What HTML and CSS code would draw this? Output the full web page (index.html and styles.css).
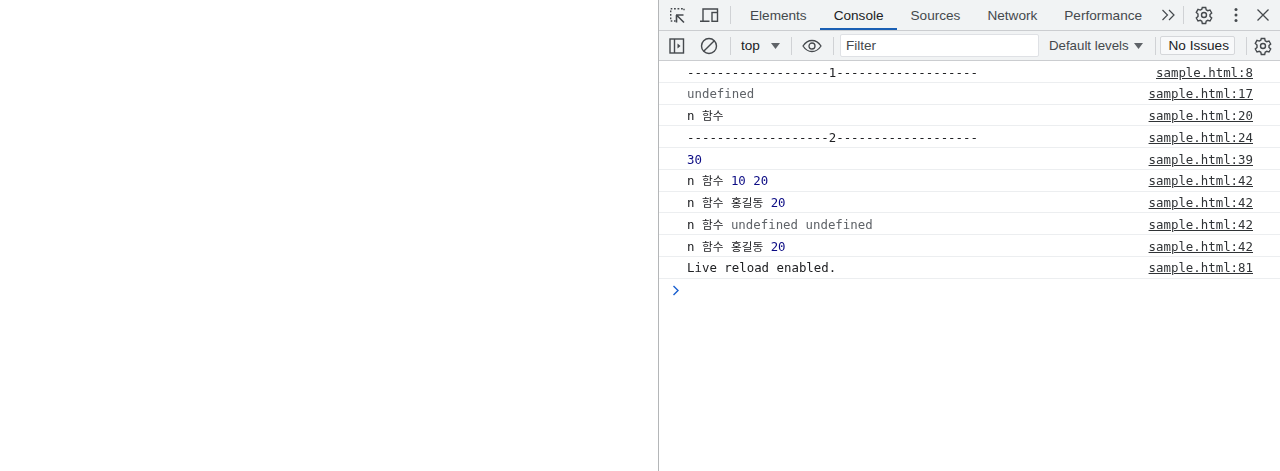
FILE: index.html
```html
<!DOCTYPE html>
<html lang="ko">
<head>
<meta charset="utf-8">
<title>Console</title>
<link rel="stylesheet" href="styles.css">
</head>
<body>
<div class="page">
  <div class="blank"></div>
  <div class="devtools">
    <div class="tabbar">
      <svg class="inspect" width="20" height="20" viewBox="0 0 20 20" fill="none" stroke="#45494d" stroke-width="1.400"><path d="M2.700 3.700h1.600M6 3.700h1.800M9.500 3.700h1.800M13 3.700h1.800M16 3.700v1.500M2.700 5.500v1.800M2.700 9v1.800M2.700 12.500v1.800M2.700 16h1.600M6 16h1.600"/><path d="M8 10h7.500M8.500 10v7.500M8.500 10l7.500 7.500" stroke-width="1.600"/></svg>
      <svg class="device" width="20" height="20" viewBox="0 0 20 20" fill="none" stroke="#45494d" stroke-width="1.400"><path d="M4 16V4h14.500v3M1 16.300h9.500"/><rect x="13" y="7.500" width="5.500" height="8.800"/></svg>
      <span class="sep"></span>
      <span class="tab">Elements</span>
      <span class="tab active">Console</span>
      <span class="tab">Sources</span>
      <span class="tab">Network</span>
      <span class="tab">Performance</span>
      <svg class="more" width="16" height="12" viewBox="0 0 16 12" fill="none" stroke="#45494d" stroke-width="1.200"><path d="M1.500 1l5 5-5 5M8 1l5 5-5 5"/></svg>
      <span class="sep"></span>
      <svg class="gear" width="20" height="20" viewBox="0 0 20 20" fill="none" stroke="#45494d" stroke-width="1.400"><path d="M8.300 2.500h3.400l.5 2.300 1.500.9 2.300-.7 1.700 3-1.700 1.600v1.800l1.700 1.600-1.700 3-2.300-.7-1.500.9-.5 2.300H8.300l-.5-2.300-1.500-.9-2.300.7-1.700-3 1.700-1.600V9l-1.700-1.600 1.700-3 2.300.7 1.500-.9z"/><circle cx="10" cy="10" r="2.500"/></svg>
      <svg class="dots" width="6" height="16" viewBox="0 0 6 16" fill="#45494d"><circle cx="3" cy="2.500" r="1.500"/><circle cx="3" cy="8" r="1.500"/><circle cx="3" cy="13.500" r="1.500"/></svg>
      <svg class="close" width="14" height="14" viewBox="0 0 14 14" fill="none" stroke="#45494d" stroke-width="1.300"><path d="M1.500 1.500l11 11M12.500 1.500l-11 11"/></svg>
    </div>
    <div class="toolbar">
      <svg class="sidebar" width="18" height="18" viewBox="0 0 18 18" fill="none" stroke="#45494d" stroke-width="1.400"><rect x="2" y="2" width="13.500" height="14"/><path d="M6.500 2v14"/><path d="M9.500 6.500l3 2.500-3 2.500z" fill="#45494d" stroke="none"/></svg>
      <svg class="clear" width="18" height="18" viewBox="0 0 18 18" fill="none" stroke="#45494d" stroke-width="1.400"><circle cx="9" cy="9" r="7.500"/><path d="M3.700 14.300L14.300 3.700"/></svg>
      <span class="sep"></span>
      <span class="ctx">top</span>
      <svg class="caret" width="9" height="6" viewBox="0 0 9 6" fill="#5f6368"><path d="M0 0h9L4.500 6z"/></svg>
      <span class="sep"></span>
      <svg class="eye" width="20" height="14" viewBox="0 0 20 14" fill="none" stroke="#45494d" stroke-width="1.300"><path d="M1 7c2.500-3.800 5.500-5.500 9-5.500S16.500 3.200 19 7c-2.500 3.800-5.500 5.500-9 5.500S3.500 10.800 1 7z"/><circle cx="10" cy="7" r="3"/></svg>
      <span class="sep"></span>
      <input class="filter" type="text" placeholder="Filter">
      <span class="levels">Default levels</span>
      <svg class="caret lv" width="9" height="6" viewBox="0 0 9 6" fill="#5f6368"><path d="M0 0h9L4.500 6z"/></svg>
      <span class="sep"></span>
      <span class="issues">No Issues</span>
      <span class="sep"></span>
      <svg class="gear2" width="20" height="20" viewBox="0 0 20 20" fill="none" stroke="#45494d" stroke-width="1.400"><path d="M8.300 2.500h3.400l.5 2.300 1.500.9 2.300-.7 1.700 3-1.700 1.600v1.800l1.700 1.600-1.700 3-2.300-.7-1.500.9-.5 2.300H8.300l-.5-2.300-1.500-.9-2.300.7-1.700-3 1.700-1.600V9l-1.700-1.600 1.700-3 2.300.7 1.500-.9z"/><circle cx="10" cy="10" r="2.500"/></svg>
    </div>
    <div class="log">
      <div class="row"><span>-------------------1-------------------</span><a>sample.html:8</a></div>
      <div class="row"><span class="undef">undefined</span><a>sample.html:17</a></div>
      <div class="row"><span>n <span class="ko">함수</span></span><a>sample.html:20</a></div>
      <div class="row"><span>-------------------2-------------------</span><a>sample.html:24</a></div>
      <div class="row"><span class="num">30</span><a>sample.html:39</a></div>
      <div class="row"><span>n <span class="ko">함수</span> <span class="num">10 20</span></span><a>sample.html:42</a></div>
      <div class="row"><span>n <span class="ko">함수</span> <span class="ko">홍길동</span> <span class="num">20</span></span><a>sample.html:42</a></div>
      <div class="row"><span>n <span class="ko">함수</span> <span class="undef">undefined undefined</span></span><a>sample.html:42</a></div>
      <div class="row"><span>n <span class="ko">함수</span> <span class="ko">홍길동</span> <span class="num">20</span></span><a>sample.html:42</a></div>
      <div class="row"><span>Live reload enabled.</span><a>sample.html:81</a></div>
      <div class="prompt"><svg width="8" height="11" viewBox="0 0 8 11" fill="none" stroke="#1a5fd0" stroke-width="1.400"><path d="M1.500 1l4.500 4.500L1.500 10"/></svg></div>
    </div>
  </div>
</div>
</body>
</html>
```
FILE: styles.css
```css
html, body { margin: 0; padding: 0; height: 100%; background: #fff; overflow: hidden; }
.page { display: flex; height: 471px; }
.blank { width: 658px; flex: none; }
.devtools { flex: 1; border-left: 1px solid #b4b6b8; font-family: "Liberation Sans", Arial, sans-serif; color: #303336; min-width: 0; filter: blur(0.3px); }
.tabbar { height: 30px; background: #f1f3f4; border-bottom: 1px solid #cbcdd0; display: flex; align-items: center; }
.toolbar { height: 29px; background: #f1f3f4; border-bottom: 1px solid #cbcdd0; display: flex; align-items: center; }
svg { flex: none; display: block; }
.sep { width: 1px; height: 18px; background: #d0d2d5; flex: none; }
.inspect { margin-left: 9px; }
.device { margin-left: 11px; }
.device + .sep { margin-left: 11px; margin-right: 5.500px; }
.tab { padding: 0 13.500px; font-size: 13.600px; line-height: 31px; height: 30px; color: #45494d; box-sizing: border-box; }
.tab.active { color: #202124; border-bottom: 2px solid #1a5fb4; }
.more { margin-left: 5.500px; }
.more + .sep { margin-left: 6px; }
.gear { margin-left: 10px; }
.dots { margin-left: 19px; }
.close { margin-left: 17px; }
.sidebar { margin-left: 9px; }
.clear { margin-left: 14px; }
.clear + .sep { margin-left: 12px; }
.ctx { margin-left: 10px; font-size: 13.600px; color: #202124; }
.caret { margin-left: 11px; }
.caret + .sep { margin-left: 11px; }
.eye { margin-left: 10px; }
.eye + .sep { margin-left: 11px; }
.filter { width: 199px; height: 23px; margin: 0 0 0 6px; padding: 0 5px; box-sizing: border-box; border: 1px solid #dfe1e5; background: #fff; border-radius: 2px; font: 13.600px "Liberation Sans", Arial, sans-serif; outline: none; }
.filter::placeholder { color: #45494d; opacity: 1; }
.levels { margin-left: 10px; font-size: 13.300px; color: #45494d; }
.caret.lv { margin-left: 5px; }
.caret.lv + .sep { margin-left: 12px; }
.issues { margin-left: 4px; width: 75px; height: 19px; box-sizing: border-box; border: 1px solid #d5d7da; border-radius: 2px; font-size: 13.600px; line-height: 17px; text-align: center; padding-left: 3px; color: #202124; background: #f8f9fa; }
.issues + .sep { margin-left: 11px; }
.gear2 { margin-left: 6px; }
.log { font-family: "DejaVu Sans Mono", monospace; font-size: 12.400px; color: #202124; }
.row { height: 21.750px; box-sizing: border-box; border-bottom: 1px solid #eceef0; display: flex; justify-content: space-between; padding: 0.500px 27px 0 28px; line-height: 22px; white-space: pre; }
.row a { text-decoration: underline; color: #303336; }
.ko { font-family: "Noto Sans CJK KR", sans-serif; font-size: 11.700px; line-height: 1; }
.undef { color: #5f6368; }
.num { color: #0b0b84; }
.prompt { padding: 6px 0 0 13px; }
```
